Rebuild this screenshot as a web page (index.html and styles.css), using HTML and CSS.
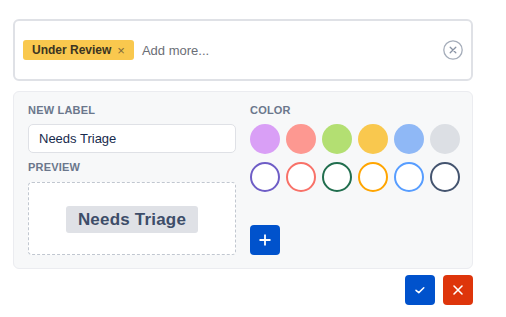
FILE: index.html
```html
<!DOCTYPE html>
<html lang="en">
<head>
    <meta charset="UTF-8">
    <meta name="viewport" content="width=device-width, initial-scale=1.0">
    <title>Label Picker</title>
    <link rel="stylesheet" href="styles.css">
</head>
<body>
    <div class="wrap">
        <div class="picker">
            <span class="tag">Under Review <span class="tag-x">&times;</span></span>
            <span class="placeholder">Add more...</span>
            <span class="clear">
                <svg width="20" height="20" viewBox="0 0 20 20">
                    <circle cx="10" cy="10" r="9.2" fill="none" stroke="#a5adba" stroke-width="1.3"/>
                    <path d="M7.2 7.2 L12.8 12.8 M12.8 7.2 L7.2 12.8" stroke="#8993a4" stroke-width="1.3" stroke-linecap="round"/>
                </svg>
            </span>
        </div>

        <div class="panel">
            <div class="col">
                <div class="label">New label</div>
                <div class="field">Needs Triage</div>
                <div class="label">Preview</div>
                <div class="preview">
                    <span class="preview-tag">Needs Triage</span>
                </div>
            </div>
            <div class="col">
                <div class="label">Color</div>
                <div class="swatches">
                    <span class="dot" style="background:#d99ff6"></span>
                    <span class="dot" style="background:#fd9891"></span>
                    <span class="dot" style="background:#b3df72"></span>
                    <span class="dot" style="background:#f9c84e"></span>
                    <span class="dot" style="background:#8fb8f6"></span>
                    <span class="dot" style="background:#dcdfe4"></span>
                    <span class="ring" style="border-color:#6e5dc6"></span>
                    <span class="ring" style="border-color:#f87168"></span>
                    <span class="ring" style="border-color:#216e4e"></span>
                    <span class="ring" style="border-color:#ffa500"></span>
                    <span class="ring" style="border-color:#579dff"></span>
                    <span class="ring" style="border-color:#44546f"></span>
                </div>
                <button class="add-btn">
                    <svg width="14" height="14" viewBox="0 0 14 14">
                        <path d="M7 1.5 V12.5 M1.5 7 H12.5" stroke="#fff" stroke-width="1.8"/>
                    </svg>
                </button>
            </div>
        </div>

        <div class="actions">
            <button class="act ok">
                <svg width="12" height="12" viewBox="0 0 12 12">
                    <path d="M2 6.3 L4.8 8.6 L9.8 3.8" fill="none" stroke="#fff" stroke-width="1.5" stroke-linecap="round" stroke-linejoin="round"/>
                </svg>
            </button>
            <button class="act cancel">
                <svg width="12" height="12" viewBox="0 0 12 12">
                    <path d="M2 2 L10 10 M10 2 L2 10" stroke="#fff" stroke-width="1.6" stroke-linecap="round"/>
                </svg>
            </button>
        </div>
    </div>
</body>
</html>
```

FILE: styles.css
```css
body {
    margin: 0;
    background-color: #fff;
    font-family: "Liberation Sans", Arial, sans-serif;
    color: #172b4d;
}
.wrap {
    width: 460px;
    padding: 19px 0 0 13px;
}
.picker {
    height: 58px;
    border: 2px solid #dfe1e6;
    border-radius: 6px;
    display: flex;
    align-items: center;
    padding: 0 8px;
}
.tag {
    display: flex;
    align-items: center;
    height: 20px;
    padding: 0 9px 0 9px;
    background-color: #f9c84e;
    border-radius: 3px;
    font-size: 12px;
    font-weight: bold;
    color: #3b3522;
}
.tag-x {
    margin-left: 6px;
    font-weight: normal;
    font-size: 13px;
    color: #7d6a3a;
}
.placeholder {
    margin-left: 8px;
    font-size: 13px;
    color: #6b6e76;
    flex: 1;
}
.clear {
    display: flex;
    width: 20px;
    height: 20px;
}
.panel {
    margin-top: 10px;
    height: 153px;
    border: 1px solid #ebecf0;
    border-radius: 6px;
    background-color: #f7f8f9;
    padding: 11px 12px 12px 14px;
    display: flex;
    gap: 14px;
}
.col {
    display: flex;
    flex-direction: column;
}
.col:first-child {
    width: 208px;
}
.label {
    font-size: 11px;
    line-height: 14px;
    font-weight: bold;
    text-transform: uppercase;
    color: #6b778c;
    letter-spacing: 0.2px;
}
.field {
    margin: 7px 0;
    height: 27px;
    border: 1px solid #dfe1e6;
    border-radius: 5px;
    background-color: #fff;
    font-size: 13px;
    line-height: 27px;
    padding-left: 10px;
}
.preview {
    margin-top: 8px;
    height: 71px;
    border: 1px dashed #c1c7d0;
    border-radius: 4px;
    background-color: #fff;
    display: flex;
    align-items: center;
    justify-content: center;
}
.preview-tag {
    margin-top: 2px;
    padding: 0 12px;
    height: 27px;
    line-height: 27px;
    background-color: #dfe1e6;
    border-radius: 3px;
    font-size: 17px;
    font-weight: bold;
    color: #3d4d69;
    letter-spacing: 0.2px;
}
.swatches {
    margin-top: 7px;
    display: grid;
    grid-template-columns: repeat(6, 30px);
    column-gap: 6px;
    row-gap: 8px;
}
.dot, .ring {
    width: 30px;
    height: 30px;
    border-radius: 50%;
    box-sizing: border-box;
}
.ring {
    border: 2px solid;
    background-color: #fff;
}
.add-btn {
    margin-top: 33px;
    width: 30px;
    height: 30px;
    border: none;
    border-radius: 4px;
    background-color: #0052cc;
    display: flex;
    align-items: center;
    justify-content: center;
    padding: 0;
}
.actions {
    margin-top: 6px;
    display: flex;
    justify-content: flex-end;
    gap: 8px;
}
.act {
    width: 30px;
    height: 30px;
    border: none;
    border-radius: 4px;
    padding: 0;
    display: flex;
    align-items: center;
    justify-content: center;
}
.ok {
    background-color: #0052cc;
}
.cancel {
    background-color: #de350b;
}
```
